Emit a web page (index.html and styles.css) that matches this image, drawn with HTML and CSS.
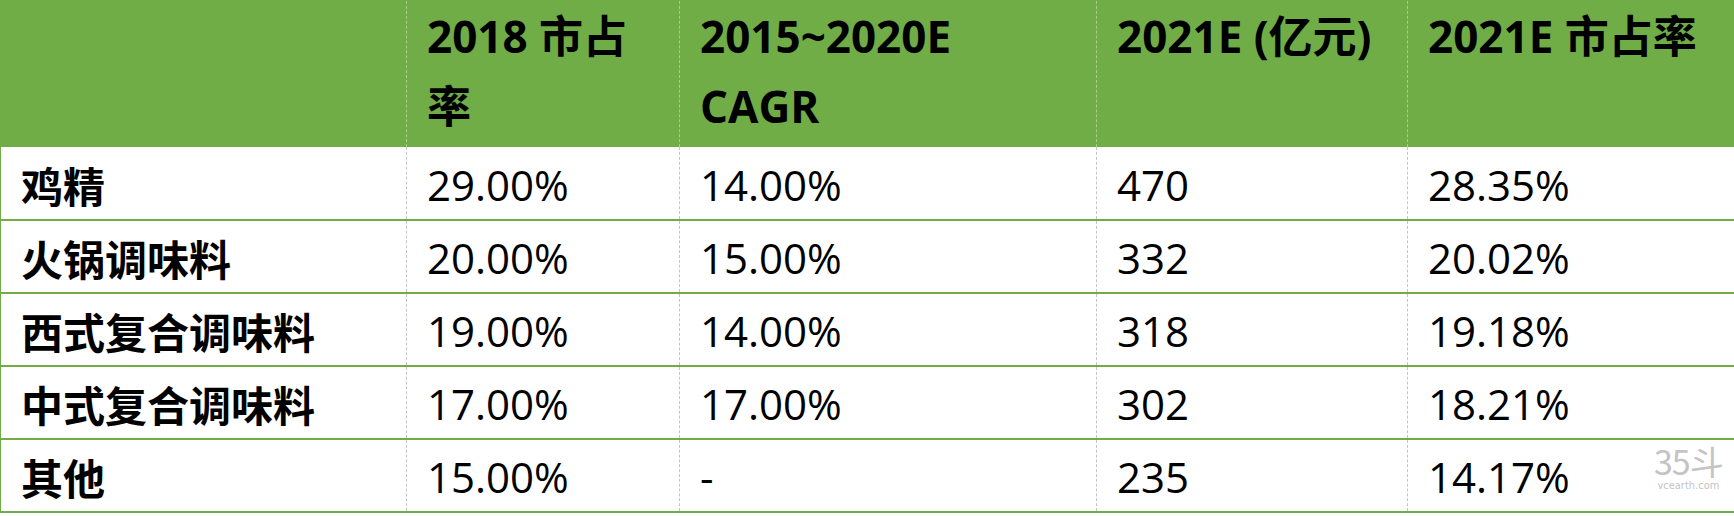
FILE: index.html
```html
<!DOCTYPE html>
<html lang="zh-CN">
<head>
<meta charset="utf-8">
<title>复合调味料市场</title>
<link rel="stylesheet" href="styles.css">
</head>
<body>
<div class="wrap">
<table class="tbl">
  <colgroup>
    <col class="c1"><col class="c2"><col class="c3"><col class="c4"><col class="c5">
  </colgroup>
  <thead>
    <tr>
      <th></th>
      <th>2018 市占<br>率</th>
      <th>2015~2020E<br>CAGR</th>
      <th>2021E (亿元)</th>
      <th>2021E 市占率</th>
    </tr>
  </thead>
  <tbody>
    <tr><td class="name">鸡精</td><td>29.00%</td><td>14.00%</td><td>470</td><td>28.35%</td></tr>
    <tr><td class="name">火锅调味料</td><td>20.00%</td><td>15.00%</td><td>332</td><td>20.02%</td></tr>
    <tr><td class="name">西式复合调味料</td><td>19.00%</td><td>14.00%</td><td>318</td><td>19.18%</td></tr>
    <tr><td class="name">中式复合调味料</td><td>17.00%</td><td>17.00%</td><td>302</td><td>18.21%</td></tr>
    <tr><td class="name">其他</td><td>15.00%</td><td>-</td><td>235</td><td>14.17%</td></tr>
  </tbody>
</table>
<div class="mark">
  <span class="mark-big">35斗</span>
  <span class="mark-small">vcearth.com</span>
</div>
</div>
</body>
</html>
```
FILE: styles.css
```css
html, body {
  margin: 0;
  padding: 0;
  background: #ffffff;
}
.wrap {
  position: relative;
  width: 1734px;
  height: 516px;
}
.tbl {
  border-collapse: collapse;
  table-layout: fixed;
  width: 1734px;
  font-family: "Open Sans", "Noto Sans CJK SC", sans-serif;
  color: #000;
  font-size: 42px;
}
.c1 { width: 406px; }
.c2 { width: 273px; }
.c3 { width: 417px; }
.c4 { width: 311px; }
.c5 { width: 327px; }
.tbl th {
  background: #70ad47;
  height: 146px;
  box-sizing: border-box;
  text-align: left;
  vertical-align: top;
  font-weight: 700;
  font-size: 44px;
  line-height: 70px;
  padding: 0 6px 0 20px;
  border-left: 1px dashed #a8cf8e;
  border-top: 1px solid #70ad47;
  white-space: nowrap;
}
.tbl th:first-child { border-left: 1px solid #70ad47; }
.tbl th:last-child { border-right: 1px solid #70ad47; }
.tbl td {
  height: 73px;
  box-sizing: border-box;
  padding: 4px 10px 0 20px;
  vertical-align: middle;
  line-height: 1;
  font-weight: 400;
  border-left: 1px dashed #c4c4c4;
  border-bottom: 2px solid #70ad47;
  white-space: nowrap;
}
.tbl td:first-child { border-left: 1px solid #70ad47; }
.tbl td:last-child { border-right: 1px solid #70ad47; }
.tbl td.name {
  font-weight: 700;
  font-family: "Noto Sans CJK SC", sans-serif;
}
.mark {
  position: absolute;
  left: 1654px;
  top: 444px;
  display: flex;
  flex-direction: column;
  align-items: center;
  gap: 2px;
  color: #c4c4c4;
  font-family: "Liberation Sans Narrow", "Noto Sans CJK SC", sans-serif;
}
.mark-big {
  font-size: 34px;
  line-height: 34px;
  letter-spacing: -1px;
}
.mark-small {
  font-size: 11px;
  line-height: 12px;
  font-family: "DejaVu Sans Condensed", sans-serif;
}
```
